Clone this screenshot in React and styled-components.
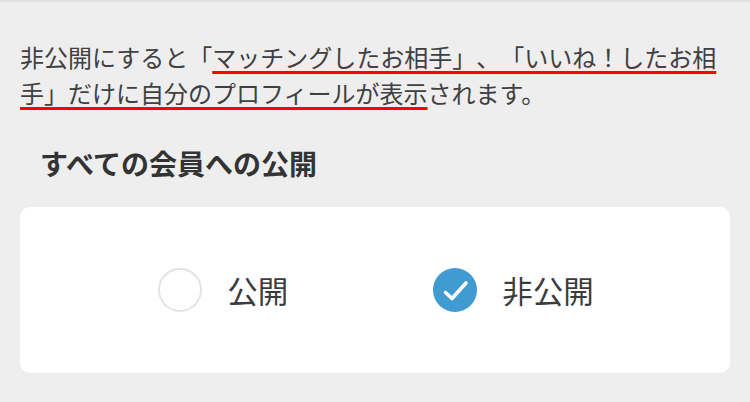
import React from "react";
import styled, { createGlobalStyle } from "styled-components";

const GlobalStyle = createGlobalStyle`
  html, body {
    margin: 0;
    padding: 0;
    background: #eeeeee;
  }
  body {
    font-family: "Noto Sans CJK JP", "Noto Sans", sans-serif;
    color: #3a3a3a;
    text-spacing-trim: space-all;
  }
`;

const Page = styled.div`
  box-sizing: border-box;
  width: 750px;
  height: 402px;
  overflow: hidden;
  background: #eeeeee;
  border-top: 2px solid #e0e0e0;
  padding: 37px 20px 0;
`;

const Note = styled.p`
  margin: 0;
  font-size: 24px;
  line-height: 36px;
  color: #404040;
  line-break: strict;
  text-spacing-trim: space-all;
`;

const Marked = styled.span`
  text-decoration: underline;
  text-decoration-color: #ff0000;
  text-decoration-thickness: 3px;
  text-underline-offset: 4px;
  text-decoration-skip-ink: none;
`;

const Heading = styled.h2`
  margin: 34px 0 0;
  padding-left: 20px;
  font-size: 28px;
  line-height: 36px;
  font-weight: 700;
  color: #333333;
`;

const Card = styled.div`
  margin-top: 26px;
  height: 166px;
  background: #ffffff;
  border-radius: 10px;
  display: flex;
  align-items: center;
  justify-content: center;
  gap: 145px;
  padding-left: 2px;
  box-sizing: border-box;
`;

const Option = styled.label`
  display: flex;
  align-items: center;
  gap: 25px;
  cursor: pointer;
`;

const Circle = styled.span`
  box-sizing: border-box;
  width: 44px;
  height: 44px;
  border-radius: 50%;
  display: flex;
  align-items: center;
  justify-content: center;
  background: ${(p) => (p.$checked ? "#419bd3" : "#ffffff")};
  border: ${(p) => (p.$checked ? "none" : "2px solid #e3e3e3")};
`;

const Label = styled.span`
  font-size: 30.5px;
  line-height: 40px;
  color: #3c3c3c;
  font-weight: 400;
`;

const Check = () => (
  <svg width="44" height="44" viewBox="0 0 44 44">
    <path
      d="M12.5 24.5 L19 30.5 L33 15"
      fill="none"
      stroke="#ffffff"
      strokeWidth="3.6"
      strokeLinecap="round"
      strokeLinejoin="round"
    />
  </svg>
);

export default function App() {
  return (
    <>
      <GlobalStyle />
      <Page>
        <Note>
          非公開にすると「<Marked>マッチングしたお相手」、「いいね！したお相手」だけに自分のプロフィールが表示</Marked>されます。
        </Note>
        <Heading>すべての会員への公開</Heading>
        <Card>
          <Option>
            <Circle />
            <Label>公開</Label>
          </Option>
          <Option>
            <Circle $checked>
              <Check />
            </Circle>
            <Label>非公開</Label>
          </Option>
        </Card>
      </Page>
    </>
  );
}
